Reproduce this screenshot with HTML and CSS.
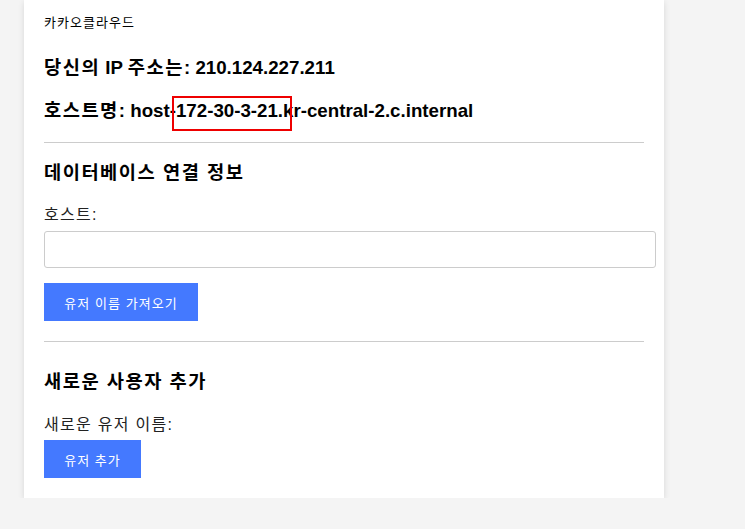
FILE: index.html
```html
<!DOCTYPE html>
<html lang="ko">
<head>
<meta charset="utf-8">
<title>카카오클라우드</title>
<link rel="stylesheet" href="styles.css">
</head>
<body>
<div class="card">
  <div class="brand ko">카카오클라우드</div>
  <div class="info ip"><span class="ko">당신의</span> IP <span class="ko">주소는</span>: 210.124.227.211</div>
  <div class="info host"><span class="ko">호스트명</span>: host-172-30-3-21.kr-central-2.c.internal<span class="mark"></span></div>
  <hr class="rule">
  <h2 class="section-title ko first">데이터베이스 연결 정보</h2>
  <label class="field-label ko" for="host">호스트:</label>
  <input class="text-input" id="host" type="text">
  <button class="btn btn-fetch ko" type="button">유저 이름 가져오기</button>
  <hr class="rule rule-2">
  <h2 class="section-title ko second">새로운 사용자 추가</h2>
  <label class="field-label ko label-new">새로운 유저 이름:</label>
  <button class="btn btn-add ko" type="button">유저 추가</button>
</div>
</body>
</html>
```

FILE: styles.css
```css
html, body {
  margin: 0;
  padding: 0;
}
body {
  background: #f4f4f4;
  font-family: "Liberation Sans", "Noto Sans CJK KR", sans-serif;
  color: #000;
}
.ko {
  letter-spacing: 0.08em;
}
.card {
  margin-left: 24px;
  width: 600px;
  padding: 13px 20px 20px;
  background: #fff;
  box-shadow: 0 2px 6px rgba(0, 0, 0, 0.12);
  display: flex;
  flex-direction: column;
  align-items: flex-start;
}
.brand {
  font-size: 13px;
  line-height: 20px;
}
.info {
  font-size: 18.72px;
  font-weight: bold;
  line-height: 24px;
}
.ip {
  margin-top: 23px;
}
.host {
  margin-top: 19px;
  position: relative;
}
.mark {
  position: absolute;
  left: 128px;
  top: -3px;
  width: 116px;
  height: 31px;
  border: 2px solid #ee0000;
}
.rule {
  align-self: stretch;
  border: 0;
  border-top: 1px solid #cccccc;
  margin: 19px 0 0;
  height: 0;
}
.rule-2 {
  margin-top: 20px;
}
.section-title {
  font-size: 18.72px;
  font-weight: bold;
  line-height: 26px;
  margin: 0;
}
.section-title.first {
  margin-top: 17px;
}
.section-title.second {
  margin-top: 27px;
}
.field-label {
  font-size: 16px;
  line-height: 20px;
  margin-top: 19px;
  color: #222;
}
.label-new {
  margin-top: 20px;
}
.text-input {
  margin-top: 6px;
  width: 612px;
  height: 37px;
  box-sizing: border-box;
  border: 1px solid #cccccc;
  border-radius: 3px;
  padding: 5px;
  font-size: 16px;
  background: #fff;
}
.btn {
  background: #4479ff;
  color: #fff;
  border: 0;
  border-radius: 0;
  height: 38px;
  font-family: "Liberation Sans", "Noto Sans CJK KR", sans-serif;
  font-size: 13px;
  padding: 0;
}
.btn-fetch {
  margin-top: 15px;
  width: 154px;
}
.btn-add {
  margin-top: 5px;
  width: 97px;
}
```
